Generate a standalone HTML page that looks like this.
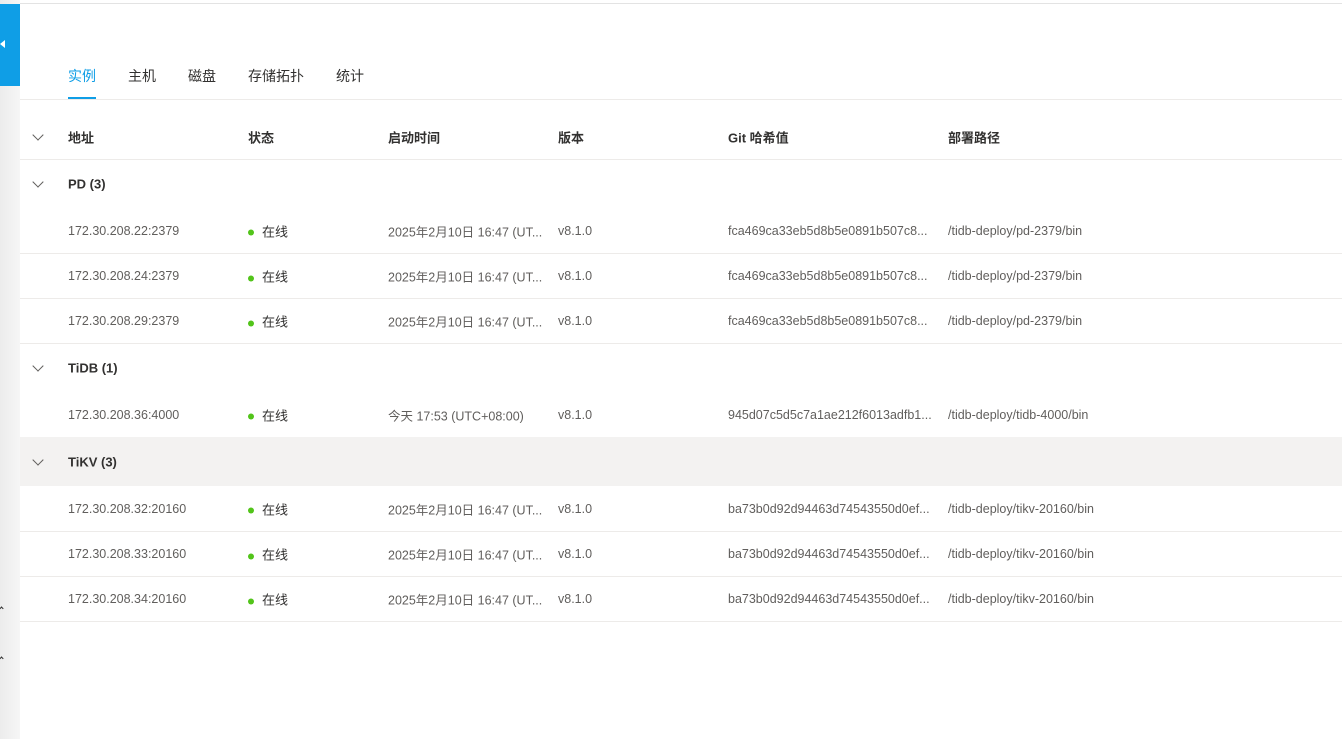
<!DOCTYPE html>
<html><head><meta charset="utf-8"><style>
*{margin:0;padding:0;box-sizing:border-box}
body{width:1342px;height:739px;overflow:hidden;background:#fff;font-family:"Liberation Sans","Noto Sans CJK SC",sans-serif;position:relative}
.side{position:absolute;left:0;top:0;width:20px;height:739px;background:linear-gradient(90deg,#ececec,#f6f6f6)}
.blue{position:absolute;left:0;top:4px;width:20px;height:82px;background:#0f9ee6}
.topl{position:absolute;left:20px;top:3px;right:0;height:1px;background:#e3e3e3}
.tabs{position:absolute;left:68px;top:66px;font-size:14px;color:#323130}
.tabs span{position:absolute;white-space:nowrap}
.tabl{position:absolute;left:20px;right:0;top:99px;height:1px;background:#edebe9}
.ul{position:absolute;left:68px;top:97px;width:28px;height:2px;background:#0f9ee6}
.r{position:absolute;left:20px;right:0;font-size:12.5px;color:#605e5c}
.r span{position:absolute;white-space:nowrap;top:50%;transform:translateY(-50%)}
.h{font-size:13px;font-weight:bold;color:#323130}
.g{font-size:13px;font-weight:bold;color:#323130}
.bl{border-bottom:1px solid #edebe9}
.chev{position:absolute;left:14px;top:50%;width:8px;height:8px;border-right:1.3px solid #605e5c;border-bottom:1.3px solid #605e5c;transform:translateY(-75%) rotate(45deg)!important}
.dot{display:inline-block;width:6px;height:6px;border-radius:3px;background:#52c41a;margin-right:8px;vertical-align:middle}
.st{color:#323130;font-size:13px}
.mk{position:absolute;left:0;width:3px;height:3px;border-left:1px solid #333;border-top:1px solid #333;transform:rotate(45deg)}
</style></head><body>
<div class="side"></div><div class="blue"></div><div class="topl"></div>
<div style="position:absolute;left:0;top:40px;width:0;height:0;border-top:4px solid transparent;border-bottom:4px solid transparent;border-right:5px solid #fff"></div>
<div class="mk" style="top:607px"></div><div class="mk" style="top:657px"></div>
<div class="tabs"><span style="left:0;color:#0f9ee6">实例</span><span style="left:60px">主机</span><span style="left:120px">磁盘</span><span style="left:180px">存储拓扑</span><span style="left:268px">统计</span></div>
<div class="tabl"></div><div class="ul"></div>

<div class="r h bl" style="top:115px;height:45px"><i class="chev"></i><span style="left:48px">地址</span><span style="left:228px">状态</span><span style="left:368px">启动时间</span><span style="left:538px">版本</span><span style="left:708px">Git 哈希值</span><span style="left:928px">部署路径</span></div>

<div class="r g" style="top:160px;height:48px"><i class="chev"></i><span style="left:48px">PD (3)</span></div>
<div class="r bl" style="top:208px;height:46px"><span style="left:48px">172.30.208.22:2379</span><span class="st" style="left:228px"><i class="dot"></i>在线</span><span style="left:368px">2025年2月10日 16:47 (UT...</span><span style="left:538px">v8.1.0</span><span style="left:708px">fca469ca33eb5d8b5e0891b507c8...</span><span style="left:928px">/tidb-deploy/pd-2379/bin</span></div>
<div class="r bl" style="top:254px;height:45px"><span style="left:48px">172.30.208.24:2379</span><span class="st" style="left:228px"><i class="dot"></i>在线</span><span style="left:368px">2025年2月10日 16:47 (UT...</span><span style="left:538px">v8.1.0</span><span style="left:708px">fca469ca33eb5d8b5e0891b507c8...</span><span style="left:928px">/tidb-deploy/pd-2379/bin</span></div>
<div class="r bl" style="top:299px;height:45px"><span style="left:48px">172.30.208.29:2379</span><span class="st" style="left:228px"><i class="dot"></i>在线</span><span style="left:368px">2025年2月10日 16:47 (UT...</span><span style="left:538px">v8.1.0</span><span style="left:708px">fca469ca33eb5d8b5e0891b507c8...</span><span style="left:928px">/tidb-deploy/pd-2379/bin</span></div>

<div class="r g" style="top:344px;height:48px"><i class="chev"></i><span style="left:48px">TiDB (1)</span></div>
<div class="r" style="top:392px;height:45px"><span style="left:48px">172.30.208.36:4000</span><span class="st" style="left:228px"><i class="dot"></i>在线</span><span style="left:368px">今天 17:53 (UTC+08:00)</span><span style="left:538px">v8.1.0</span><span style="left:708px">945d07c5d5c7a1ae212f6013adfb1...</span><span style="left:928px">/tidb-deploy/tidb-4000/bin</span></div>

<div class="r g" style="top:437px;height:49px;background:#f3f2f1"><i class="chev"></i><span style="left:48px">TiKV (3)</span></div>
<div class="r bl" style="top:486px;height:46px"><span style="left:48px">172.30.208.32:20160</span><span class="st" style="left:228px"><i class="dot"></i>在线</span><span style="left:368px">2025年2月10日 16:47 (UT...</span><span style="left:538px">v8.1.0</span><span style="left:708px">ba73b0d92d94463d74543550d0ef...</span><span style="left:928px">/tidb-deploy/tikv-20160/bin</span></div>
<div class="r bl" style="top:532px;height:45px"><span style="left:48px">172.30.208.33:20160</span><span class="st" style="left:228px"><i class="dot"></i>在线</span><span style="left:368px">2025年2月10日 16:47 (UT...</span><span style="left:538px">v8.1.0</span><span style="left:708px">ba73b0d92d94463d74543550d0ef...</span><span style="left:928px">/tidb-deploy/tikv-20160/bin</span></div>
<div class="r bl" style="top:577px;height:45px"><span style="left:48px">172.30.208.34:20160</span><span class="st" style="left:228px"><i class="dot"></i>在线</span><span style="left:368px">2025年2月10日 16:47 (UT...</span><span style="left:538px">v8.1.0</span><span style="left:708px">ba73b0d92d94463d74543550d0ef...</span><span style="left:928px">/tidb-deploy/tikv-20160/bin</span></div>
</body></html>
